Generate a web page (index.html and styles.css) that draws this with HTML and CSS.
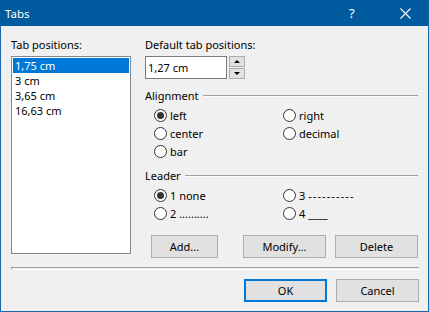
FILE: index.html
```html
<!DOCTYPE html>
<html>
<head>
<meta charset="utf-8">
<link rel="stylesheet" href="styles.css">
</head>
<body>
<div class="window">
  <div class="titlebar">
    <span class="title">Tabs</span>
    <span class="help">?</span>
    <svg class="close" width="11" height="11" viewBox="0 0 11 11"><path d="M0.5 0.5 L10.5 10.5 M10.5 0.5 L0.5 10.5" stroke="#fff" stroke-width="1.1" fill="none"/></svg>
  </div>
  <div class="content">
    <div class="main">
      <div class="left">
        <div class="label">Tab positions:</div>
        <div class="listbox">
          <div class="item selected">1,75 cm</div>
          <div class="item">3 cm</div>
          <div class="item">3,65 cm</div>
          <div class="item">16,63 cm</div>
        </div>
      </div>
      <div class="right">
        <div class="label">Default tab positions:</div>
        <div class="editrow">
          <div class="edit">1,27 cm</div>
          <div class="spin">
            <div class="spinbtn"><span class="tri up"></span></div>
            <div class="spinbtn"><span class="tri down"></span></div>
          </div>
        </div>
        <div class="group">
          <div class="grouphead"><span>Alignment</span><span class="rule"></span></div>
          <div class="radios">
            <div class="radio"><span class="dot checked"></span>left</div>
            <div class="radio"><span class="dot"></span>right</div>
            <div class="radio"><span class="dot"></span>center</div>
            <div class="radio"><span class="dot"></span>decimal</div>
            <div class="radio"><span class="dot"></span>bar</div>
          </div>
        </div>
        <div class="group leader">
          <div class="grouphead"><span>Leader</span><span class="rule"></span></div>
          <div class="radios">
            <div class="radio"><span class="dot checked"></span>1 none</div>
            <div class="radio"><span class="dot"></span><span>3 <span class="dashes">----------</span></span></div>
            <div class="radio"><span class="dot"></span>2 ..........</div>
            <div class="radio"><span class="dot"></span>4 ____</div>
          </div>
        </div>
        <div class="btnrow">
          <button class="btn add">Add...</button>
          <button class="btn">Modify...</button>
          <button class="btn">Delete</button>
        </div>
      </div>
    </div>
    <div class="separator"></div>
    <div class="footer">
      <button class="btn default">OK</button>
      <button class="btn">Cancel</button>
    </div>
  </div>
</div>
</body>
</html>
```
FILE: styles.css
```css
html, body {
  margin: 0;
  padding: 0;
}
body {
  font-family: "Noto Sans", "DejaVu Sans", sans-serif;
  font-size: 11px;
  color: #000;
  background: #f0f0f0;
}
.window {
  width: 429px;
  height: 312px;
  box-sizing: border-box;
  border: 1px solid #1a66ac;
  border-top: none;
  background: #f0f0f0;
  display: flex;
  flex-direction: column;
}
.titlebar {
  height: 26px;
  margin: 0 -1px;
  background: #005a9e;
  color: #fff;
  display: flex;
  align-items: center;
  padding-left: 5px;
}
.title {
  flex: 1;
  font-size: 11.5px;
}
.help {
  font-size: 13px;
  width: 10px;
  margin-right: 41px;
}
.close {
  margin-right: 18px;
}
.content {
  padding: 11px 9px 0 10px;
}
.main {
  display: flex;
  gap: 14px;
}
.left {
  width: 120px;
}
.label {
  line-height: 15px;
  height: 15px;
}
.listbox {
  margin-top: 4px;
  height: 198px;
  box-sizing: border-box;
  border: 1px solid #828790;
  background: #fff;
  padding: 1px;
}
.item {
  height: 15px;
  line-height: 15px;
  padding-left: 2px;
}
.item.selected {
  background: #0078d7;
  color: #fff;
}
.right {
  width: 273px;
}
.editrow {
  margin-top: 4px;
  display: flex;
  gap: 2px;
}
.edit {
  width: 82px;
  height: 23px;
  box-sizing: border-box;
  border: 1px solid #7a7a7a;
  background: #fff;
  line-height: 21px;
  padding-left: 2px;
}
.spin {
  display: flex;
  flex-direction: column;
  gap: 1px;
}
.spinbtn {
  width: 16px;
  height: 11px;
  box-sizing: border-box;
  border: 1px solid #adadad;
  background: #e1e1e1;
  display: flex;
  align-items: center;
  justify-content: center;
}
.tri {
  width: 0;
  height: 0;
  border-left: 3px solid transparent;
  border-right: 3px solid transparent;
}
.tri.up {
  border-bottom: 3px solid #000;
}
.tri.down {
  border-top: 3px solid #000;
}
.group {
  margin-top: 9px;
}
.group.leader {
  margin-top: 8px;
}
.grouphead {
  display: flex;
  align-items: center;
  line-height: 15px;
  height: 15px;
  gap: 4px;
}
.rule {
  flex: 1;
  height: 0;
  border-top: 1px solid #a0a0a0;
  border-bottom: 1px solid #fff;
}
.radios {
  padding: 3px 0 0 9px;
  display: grid;
  grid-template-columns: 129px 1fr;
  grid-auto-rows: 18px;
}
.radio {
  display: flex;
  align-items: center;
  gap: 3px;
  line-height: 15px;
}
.dashes {
  letter-spacing: 1.1px;
}
.dot {
  width: 13px;
  height: 13px;
  box-sizing: border-box;
  border: 1px solid #333;
  border-radius: 50%;
  background: #fff;
  display: flex;
  align-items: center;
  justify-content: center;
}
.dot.checked::after {
  content: "";
  width: 7px;
  height: 7px;
  border-radius: 50%;
  background: #333;
}
.btnrow {
  margin-top: 13px;
  display: flex;
  gap: 9px;
  padding-left: 6px;
}
.btn {
  font-family: inherit;
  font-size: 11px;
  color: #000;
  height: 23px;
  width: 83px;
  box-sizing: border-box;
  border: 1px solid #adadad;
  background: #e1e1e1;
  padding: 0;
  margin: 0;
  line-height: 20px;
}
.btn.add {
  width: 67px;
  margin-right: 16px;
}
.btn.default {
  border: 2px solid #0078d7;
}
.separator {
  margin-top: 9px;
  border-top: 1px solid #a0a0a0;
  border-left: 1px solid #a0a0a0;
  border-bottom: 1px solid #fff;
  height: 0;
  padding-bottom: 1px;
}
.footer {
  margin-top: 9px;
  display: flex;
  justify-content: flex-end;
  gap: 9px;
}
```
